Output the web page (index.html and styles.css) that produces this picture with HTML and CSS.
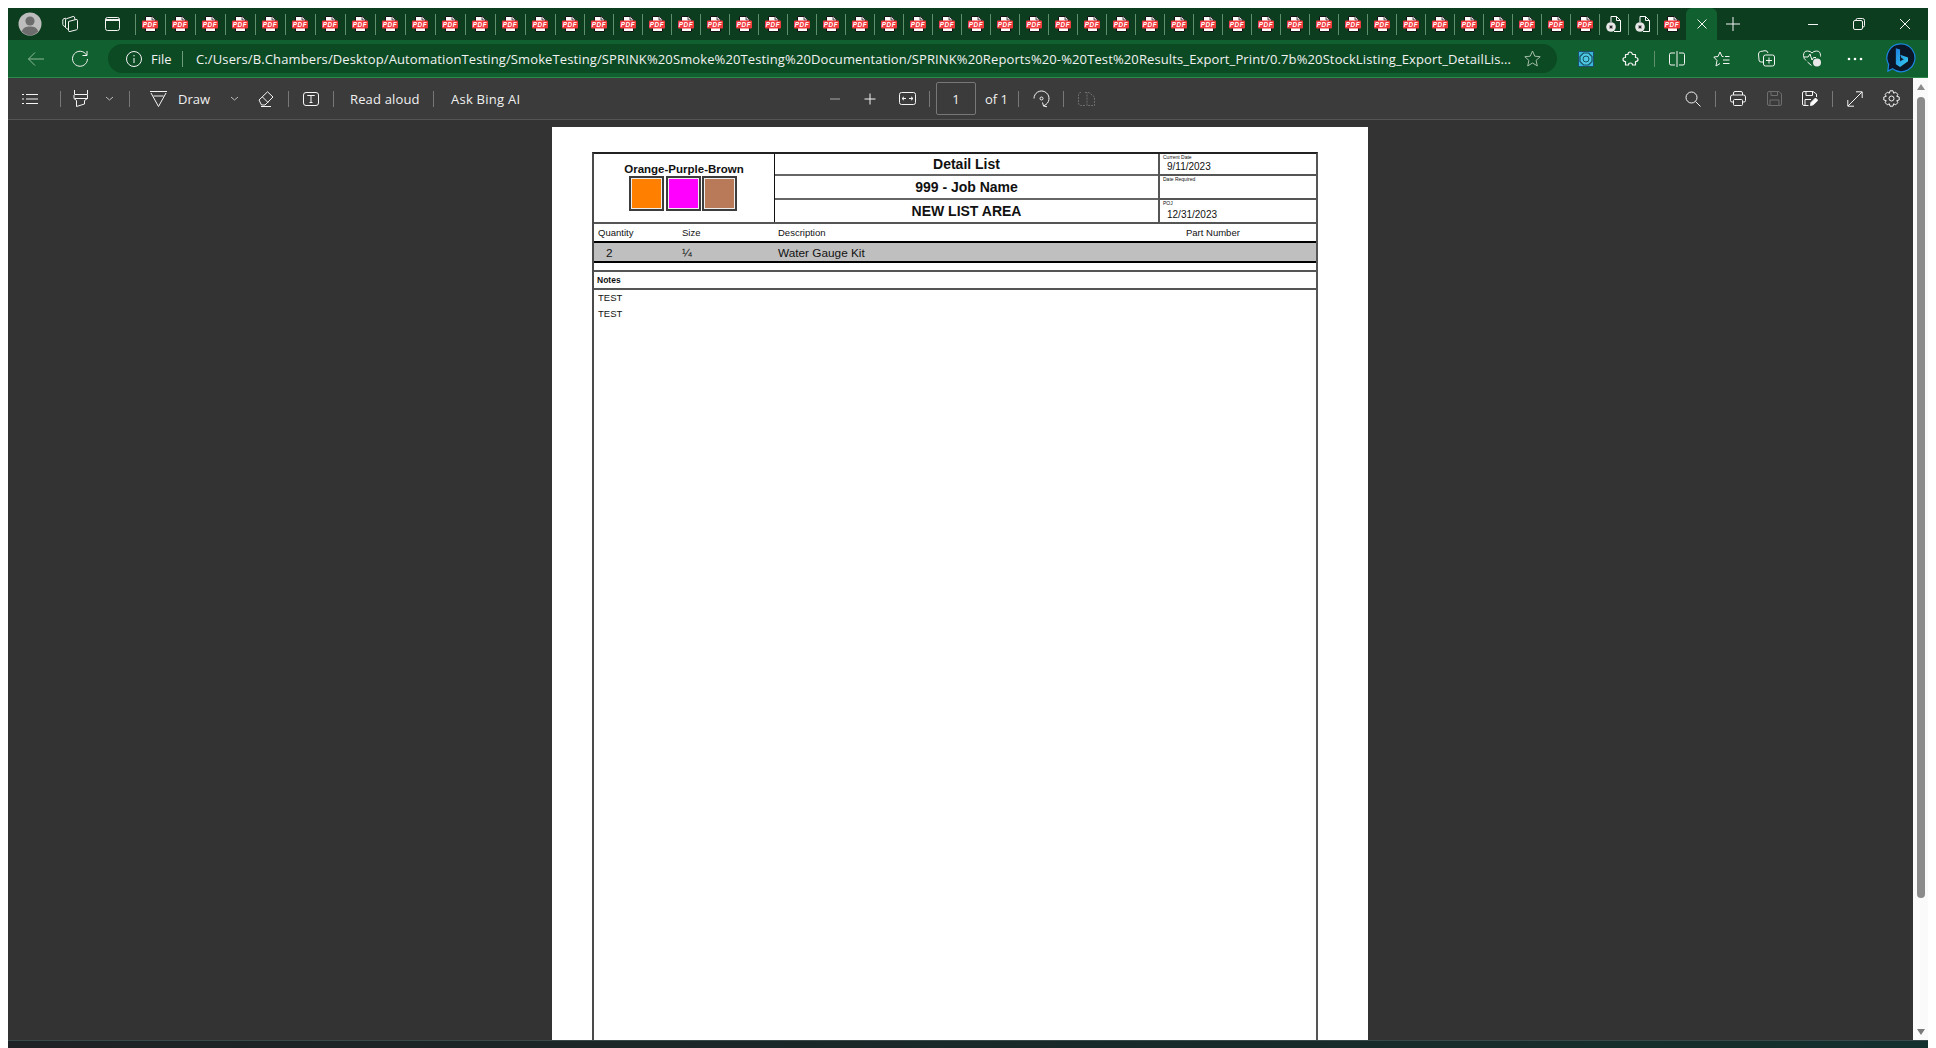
FILE: index.html
```html
<!DOCTYPE html>
<html>
<head>
<title>Detail List</title>
<link rel="stylesheet" href="styles.css">
</head>
<body>
<svg class="defs">
    <symbol id="pdf" viewBox="0 0 16 16">
        <path d="M3.5 .5H10.5L13.5 3.5V15.5H3.5Z" fill="#fff" stroke="#111"/>
        <path d="M10 .5V4H13.5" fill="#ddd" stroke="#111" stroke-width=".7"/>
        <rect x="0" y="4.5" width="16" height="8" rx="1" fill="#f03a3e"/>
        <text x="8" y="10.8" text-anchor="middle" font-family="Liberation Sans" font-weight="700" font-size="6.4" letter-spacing=".5" fill="#fff">PDF</text>
    </symbol>
    <symbol id="xdoc" viewBox="0 0 16 16">
        <path d="M5 6V.5H10.5L14.5 4.5V15.5H8M10.5 .5V4.5H14.5" fill="none" stroke="#fff"/>
        <circle cx="5" cy="11" r="4.8" fill="#e8e8e8"/>
        <path d="M3.6 9.6L6.4 12.4M6.4 9.6L3.6 12.4" stroke="#222" stroke-width="1.2"/>
    </symbol>
</svg>

<div class="window">
    <div class="tabstrip">
        <div class="avatar">
            <svg width="24" height="24" viewBox="0 0 24 24"><circle cx="12" cy="12" r="11.5" fill="#bdbdbd"/><circle cx="12" cy="9" r="4.6" fill="#6d6d6d"/><path d="M3.8 19.5C5 15.5 8 14.5 12 14.5S19 15.5 20.2 19.5A11 11 0 0 1 3.8 19.5Z" fill="#6d6d6d"/></svg>
        </div>
        <div class="strip-btn w36">
            <svg width="17" height="18" viewBox="0 0 17 18" class="line"><path d="M6.5 6.5L14 4.5Q15.5 4.2 15.5 5.5V13.5Q15.5 14.5 14.5 14.8L8 16.5Q6.5 16.8 6.5 15.5Z"/><path d="M6.5 14.5L4.5 13.5Q3.5 13 3.5 12V5Q3.5 4 4.5 3.7L11 1.5Q12 1.2 12.5 2L13 4.8"/><path d="M3.5 12L2 11Q.8 10.5 .8 9.5V5Q.8 4 2 3.7L4 3.2"/></svg>
        </div>
        <div class="strip-btn w40">
            <svg width="15" height="14" viewBox="0 0 15 14" class="line"><rect x=".5" y=".5" width="14" height="13" rx="2"/><path d="M.5 3.5H14.5M.5 2.5H14.5"/></svg>
        </div>
        <div class="tabs">
            <i class="tab"><svg><use href="#pdf"/></svg></i><i class="tab"><svg><use href="#pdf"/></svg></i><i class="tab"><svg><use href="#pdf"/></svg></i><i class="tab"><svg><use href="#pdf"/></svg></i>
            <i class="tab"><svg><use href="#pdf"/></svg></i><i class="tab"><svg><use href="#pdf"/></svg></i><i class="tab"><svg><use href="#pdf"/></svg></i><i class="tab"><svg><use href="#pdf"/></svg></i>
            <i class="tab"><svg><use href="#pdf"/></svg></i><i class="tab"><svg><use href="#pdf"/></svg></i><i class="tab"><svg><use href="#pdf"/></svg></i><i class="tab"><svg><use href="#pdf"/></svg></i>
            <i class="tab"><svg><use href="#pdf"/></svg></i><i class="tab"><svg><use href="#pdf"/></svg></i><i class="tab"><svg><use href="#pdf"/></svg></i><i class="tab"><svg><use href="#pdf"/></svg></i>
            <i class="tab"><svg><use href="#pdf"/></svg></i><i class="tab"><svg><use href="#pdf"/></svg></i><i class="tab"><svg><use href="#pdf"/></svg></i><i class="tab"><svg><use href="#pdf"/></svg></i>
            <i class="tab"><svg><use href="#pdf"/></svg></i><i class="tab"><svg><use href="#pdf"/></svg></i><i class="tab"><svg><use href="#pdf"/></svg></i><i class="tab"><svg><use href="#pdf"/></svg></i>
            <i class="tab"><svg><use href="#pdf"/></svg></i><i class="tab"><svg><use href="#pdf"/></svg></i><i class="tab"><svg><use href="#pdf"/></svg></i><i class="tab"><svg><use href="#pdf"/></svg></i>
            <i class="tab"><svg><use href="#pdf"/></svg></i><i class="tab"><svg><use href="#pdf"/></svg></i><i class="tab"><svg><use href="#pdf"/></svg></i><i class="tab"><svg><use href="#pdf"/></svg></i>
            <i class="tab"><svg><use href="#pdf"/></svg></i><i class="tab"><svg><use href="#pdf"/></svg></i><i class="tab"><svg><use href="#pdf"/></svg></i><i class="tab"><svg><use href="#pdf"/></svg></i>
            <i class="tab"><svg><use href="#pdf"/></svg></i><i class="tab"><svg><use href="#pdf"/></svg></i><i class="tab"><svg><use href="#pdf"/></svg></i><i class="tab"><svg><use href="#pdf"/></svg></i>
            <i class="tab"><svg><use href="#pdf"/></svg></i><i class="tab"><svg><use href="#pdf"/></svg></i><i class="tab"><svg><use href="#pdf"/></svg></i><i class="tab"><svg><use href="#pdf"/></svg></i>
            <i class="tab"><svg><use href="#pdf"/></svg></i><i class="tab"><svg><use href="#pdf"/></svg></i><i class="tab"><svg><use href="#pdf"/></svg></i><i class="tab"><svg><use href="#pdf"/></svg></i>
            <i class="tab"><svg><use href="#pdf"/></svg></i><i class="tab"><svg><use href="#pdf"/></svg></i><i class="tab"><svg><use href="#xdoc"/></svg></i><i class="tab"><svg><use href="#xdoc"/></svg></i><i class="tab"><svg><use href="#pdf"/></svg></i>
        </div>
        <div class="tab-active">
            <svg width="12" height="12" viewBox="0 0 12 12" class="line"><path d="M1.5 1.5L10.5 10.5M10.5 1.5L1.5 10.5"/></svg>
        </div>
        <div class="strip-btn w32">
            <svg width="16" height="16" viewBox="0 0 16 16" class="line"><path d="M8 1V15M1 8H15"/></svg>
        </div>
        <div class="win-controls">
            <div class="win-btn"><svg width="12" height="12" viewBox="0 0 12 12" class="line"><path d="M1 6.5H11"/></svg></div>
            <div class="win-btn"><svg width="12" height="12" viewBox="0 0 12 12" class="line"><rect x=".5" y="2.5" width="9" height="9" rx="1.5"/><path d="M3 2.5V2Q3 .5 4.5 .5H9.5Q11.5 .5 11.5 2.5V7.5Q11.5 9 10 9"/></svg></div>
            <div class="win-btn"><svg width="12" height="12" viewBox="0 0 12 12" class="line"><path d="M1 1L11 11M11 1L1 11"/></svg></div>
        </div>
    </div>

    <div class="addressbar">
        <div class="nav-btn back">
            <svg width="18" height="16" viewBox="0 0 18 16" fill="none" stroke="#8fb89b"><path d="M17 8H1.5M8 1.5L1.5 8L8 14.5"/></svg>
        </div>
        <div class="nav-btn">
            <svg width="18" height="18" viewBox="0 0 18 18" class="line"><path d="M15.5 5A7.5 7.5 0 1 0 16.5 9M16 1V5.5H11.5"/></svg>
        </div>
        <div class="pill">
            <svg width="16" height="16" viewBox="0 0 16 16" class="line"><circle cx="8" cy="8" r="7.5"/><path d="M8 7V12M8 4V5.4"/></svg>
            <span class="file">File</span>
            <span class="pill-sep"></span>
            <span class="url">C:/Users/B.Chambers/Desktop/AutomationTesting/SmokeTesting/SPRINK%20Smoke%20Testing%20Documentation/SPRINK%20Reports%20-%20Test%20Results_Export_Print/0.7b%20StockListing_Export_DetailLis...</span>
            <svg class="star" width="17" height="17" viewBox="0 0 17 17" fill="none" stroke="#a5bfa9"><path d="M8.5 1L10.8 6.2L16.2 6.7L12.1 10.4L13.3 15.9L8.5 13L3.7 15.9L4.9 10.4L.8 6.7L6.2 6.2Z"/></svg>
        </div>
        <div class="ext first">
            <svg width="16" height="16" viewBox="0 0 16 16"><rect x=".5" y=".5" width="15" height="15" fill="#37b6dc" stroke="#1d4f6b"/><path d="M5.5 2H10.5L14 5.5V10.500L10.500 14H5.500L2 10.500V5.500Z" fill="#4fc8e4" stroke="#17505f" stroke-width="1.200"/><circle cx="8" cy="8" r="3" fill="none" stroke="#17505f"/></svg>
        </div>
        <div class="ext">
            <svg width="17" height="16" viewBox="0 0 17 16" class="line puzzle"><path d="M4 3.5H6Q6 1 8 1T10.500 3.500H13.500V6.500Q16 6.500 16 8.500T13.500 10.500V14H10.500Q10.500 12 8.500 12T6.500 14H3.500V10.500Q1 10.500 1 8.500T3.500 6.500V3.500Z"/></svg>
        </div>
        <span class="addr-sep"></span>
        <div class="ext">
            <svg width="16" height="16" viewBox="0 0 16 16" class="line"><path d="M8 0V16M6 2H2Q.5 2 .5 3.5V12.5Q.5 14 2 14H6M10 2H14Q15.5 2 15.5 3.5V12.5Q15.5 14 14 14H10"/></svg>
        </div>
        <div class="ext">
            <svg width="17" height="16" viewBox="0 0 17 16" class="line"><path d="M10.5 5.5H9L7 1L5 5.5L.8 6L4 9.5L3 15L7 12.5"/><path d="M12 5.5H16.500M10 9H16.500M10 12.500H16.500"/></svg>
        </div>
        <div class="ext">
            <svg width="17" height="17" viewBox="0 0 17 17" class="line"><path d="M5 12H3Q1 12 1 10L.5 4Q.5 2 2.5 1.5L7 .7Q9.5 .5 10 3M7.5 5H14.5Q16.5 5 16.5 7V14Q16.5 16 14.5 16H7.5Q5.5 16 5.5 14V7Q5.5 5 7.5 5ZM11 7.5V13.5M8 10.5H14"/></svg>
        </div>
        <div class="ext">
            <svg width="18" height="17" viewBox="0 0 18 17" class="line"><path d="M3 10.5Q.5 8.5 .5 5.5Q.5 1 4.5 1Q7.5 1 9 3Q10.5 1 13.5 1Q17.5 1 17.5 5.5V6.5M1 7H5L7 4L9 10L10.5 7.5H13M4.5 12L8.5 15.5"/><circle cx="14" cy="12.5" r="4" fill="#e8e8e8" stroke="none"/></svg>
        </div>
        <div class="ext dots">
            <svg width="16" height="4" viewBox="0 0 16 4" fill="#fff"><circle cx="2" cy="2" r="1.3"/><circle cx="8" cy="2" r="1.3"/><circle cx="14" cy="2" r="1.3"/></svg>
        </div>
        <div class="bing">
            <svg width="30" height="31" viewBox="0 0 32 33">
                <defs><linearGradient id="bingfill" x1="0" y1="0" x2="1" y2="1"><stop offset="0" stop-color="#1d7fe0"/><stop offset="1" stop-color="#36d0f0"/></linearGradient></defs>
                <path d="M16 1A14.8 14.8 0 1 1 7 27.5L2 30L2.8 23A14.8 14.8 0 0 1 16 1Z" fill="#0b1626" stroke="#1a86e0" stroke-width="1.3"/>
                <path d="M10.500 5.500L15 7V19.500L19 17.200L16.500 16L15.200 12.500L23.500 15.500V19.500L15 25.500L10.500 22.500Z" fill="url(#bingfill)"/>
            </svg>
        </div>
    </div>

    <div class="viewer">
        <div class="viewer-main">
            <div class="pdf-toolbar">
                <div class="tool-group left">
                    <div class="tool w36"><svg width="16" height="12" viewBox="0 0 16 12" class="line"><path d="M4 1.5H16M4 6H16M4 10.5H16M0 1.5H2M0 6H2M0 10.5H2"/></svg></div>
                    <span class="sep s-list"></span>
                    <div class="tool w30"><svg width="16" height="17" viewBox="0 0 16 17" class="line"><path d="M1.5 0V4.5H14.5V0M1 5V8.5L3.5 10.5V16.5L11.5 14V10.5L14.5 8.5V5M1.5 8.5H14.5"/></svg></div>
                    <div class="tool w26"><svg class="chev" width="9" height="5" viewBox="0 0 9 5"><path d="M1 1L4.5 4L8 1"/></svg></div>
                    <span class="sep s-high"></span>
                    <div class="tool w36"><svg width="17" height="16" viewBox="0 0 17 16" class="line"><path d="M0 .5H17M1 2L8.5 15.5L16 2M3.5 5H13.5"/></svg></div>
                    <span class="label draw">Draw</span>
                    <div class="tool w24 after-draw"><svg class="chev" width="9" height="5" viewBox="0 0 9 5"><path d="M1 1L4.5 4L8 1"/></svg></div>
                    <div class="tool w32 eraser"><svg width="16" height="16" viewBox="0 0 16 16" class="line"><path d="M1 9L9.5 .8L15 6L7 14H3.5ZM4.5 6L10 11.5M3 15.5H13"/></svg></div>
                    <span class="sep s-eraser"></span>
                    <div class="tool w32"><svg width="16" height="14" viewBox="0 0 16 14" class="line"><rect x=".5" y=".5" width="15" height="13" rx="2.5"/><path d="M4.5 4V3.5H11.5V4M8 3.5V10.5M6.5 10.5H9.5"/></svg></div>
                    <span class="sep s-text"></span>
                    <span class="label read">Read aloud</span>
                    <span class="sep s-read"></span>
                    <span class="label ask">Ask Bing AI</span>
                </div>
                <div class="tool-group center">
                    <div class="tool w35"><svg width="12" height="12" viewBox="0 0 12 12" fill="none" stroke="#aaa"><path d="M1 6H11"/></svg></div>
                    <div class="tool w35"><svg width="12" height="12" viewBox="0 0 12 12" class="line"><path d="M6 .5V11.5M.5 6H11.5"/></svg></div>
                    <div class="tool w36 fit"><svg width="17" height="13" viewBox="0 0 17 13" class="line"><rect x=".5" y=".5" width="16" height="12" rx="2"/><path d="M3 6.5H7M5 4.8L3 6.5L5 8.2M14 6.5H10M12 4.8L14 6.5L12 8.2"/></svg></div>
                    <span class="sep s-fit"></span>
                    <div class="pagebox">1</div>
                    <span class="label of">of 1</span>
                    <span class="sep s-of"></span>
                    <div class="tool w36"><svg width="17" height="18" viewBox="0 0 17 18" class="line"><path d="M1 8.5A7.5 7.5 0 1 1 13 14.500L10.500 16M9.500 12.500L10.500 16L14 16.800"/><circle cx="8.500" cy="8.500" r="1.500"/></svg></div>
                    <span class="sep s-rot"></span>
                    <div class="tool w36"><svg width="17" height="14" viewBox="0 0 17 14" fill="none" stroke="#6e6e6e"><path d="M7 .5H11L16.5 5V13.5H9V.5M7 13.5H3Q.5 13.5 .5 11V3Q.5 .5 3 .5" stroke-dasharray="2 1"/></svg></div>
                </div>
                <div class="tool-group right">
                    <div class="tool w36"><svg width="16" height="16" viewBox="0 0 16 16" class="line"><circle cx="6.5" cy="6.5" r="5.5"/><path d="M10.5 10.5L15.5 15.5"/></svg></div>
                    <span class="sep s-search"></span>
                    <div class="tool w36"><svg width="16" height="15" viewBox="0 0 16 15" class="line"><path d="M3.5 4V2Q3.5 .5 5 .5H11Q12.5 .5 12.5 2V4M3.5 11H2Q.5 11 .5 9.5V6Q.5 4 2.5 4H13.5Q15.5 4 15.5 6V9.5Q15.5 11 14 11H12.5"/><rect x="3.5" y="8.5" width="9" height="6" rx="1"/></svg></div>
                    <div class="tool w36"><svg width="15" height="15" viewBox="0 0 15 15" fill="none" stroke="#6e6e6e"><path d="M2 .5H12L14.5 3V13Q14.5 14.5 13 14.5H2Q.5 14.5 .5 13V2Q.5 .5 2 .5ZM4 .5V4.5H10.5V.5M3 14.5V9H12V14.5"/></svg></div>
                    <div class="tool w36"><svg width="16" height="15" viewBox="0 0 16 15" class="line"><path d="M6.5 14.5H2Q.5 14.5 .5 13V2Q.5 .5 2 .5H11L14.5 3V6M4 .5V4.5H10.5V.5M3 14V8.5H9"/><path d="M8.5 14.5L9 11.5L13.5 7L15.8 9.3L11.3 13.8Z" fill="#fff"/></svg></div>
                    <span class="sep s-saveas"></span>
                    <div class="tool w36"><svg width="16" height="16" viewBox="0 0 16 16" class="line"><path d="M1 15L15 1M9 .8H15.2V7M.8 9V15.2H7"/></svg></div>
                    <div class="tool w36"><svg width="17" height="17" viewBox="0 0 17 17" class="line"><path d="M7 .8H10L10.6 3.2L12.7 2.2L14.8 4.3L13.8 6.4L16.2 7V10L13.8 10.6L14.8 12.7L12.7 14.8L10.6 13.8L10 16.2H7L6.4 13.8L4.3 14.8L2.2 12.7L3.2 10.6L.8 10V7L3.2 6.4L2.2 4.3L4.3 2.2L6.4 3.2Z"/><circle cx="8.5" cy="8.5" r="2.5"/></svg></div>
                </div>
            </div>

            <div class="canvas">
                <div class="page">
                    <div class="sheet">
                        <div class="head">
                            <div class="colors">
                                <div class="colors-name">Orange-Purple-Brown</div>
                                <div class="swatches">
                                    <span class="swatch orange"></span>
                                    <span class="swatch magenta"></span>
                                    <span class="swatch brown"></span>
                                </div>
                            </div>
                            <div class="titles">
                                <div class="title-row">Detail List</div>
                                <div class="title-row">999 - Job Name</div>
                                <div class="title-row">NEW LIST AREA</div>
                            </div>
                            <div class="dates">
                                <div class="date-row"><span class="date-label">Current Date</span><span class="date-value">9/11/2023</span></div>
                                <div class="date-row"><span class="date-label">Date Required</span></div>
                                <div class="date-row"><span class="date-label">POJ</span><span class="date-value">12/31/2023</span></div>
                            </div>
                        </div>
                        <div class="cols">
                            <span class="c-qty">Quantity</span>
                            <span class="c-size">Size</span>
                            <span class="c-desc">Description</span>
                            <span class="c-part">Part Number</span>
                        </div>
                        <div class="item">
                            <span class="c-qty i-qty">2</span>
                            <span class="c-size">¼</span>
                            <span class="c-desc">Water Gauge Kit</span>
                        </div>
                        <div class="spacer"></div>
                        <div class="notes-head">Notes</div>
                        <div class="notes">
                            <div>TEST</div>
                            <div>TEST</div>
                        </div>
                    </div>
                </div>
            </div>
        </div>
        <div class="scrollbar">
            <span class="arrow up"></span>
            <span class="thumb"></span>
            <span class="arrow down"></span>
        </div>
    </div>
    <div class="taskbar"></div>
</div>
</body>
</html>
```

FILE: styles.css
```css
*{
    margin: 0;
    padding: 0;
    box-sizing: border-box;
}
html, body{
    height: 100%;
    overflow: hidden;
    background: #fff;
}
.defs{
    display: none;
}
.window{
    margin: 8px 8px 0 8px;
    height: 1040px;
    display: flex;
    flex-direction: column;
    font-family: "Open Sans", sans-serif;
    color: #f2f2f2;
}
svg{
    display: block;
}
.line{
    fill: none;
    stroke: #f4f4f4;
    stroke-width: 1;
}
.puzzle{
    stroke-width: 1.2;
    stroke-linejoin: round;
}

/* tab strip */
.tabstrip{
    height: 32px;
    background: #0c3d1e;
    display: flex;
    align-items: stretch;
    flex-shrink: 0;
}
.avatar{
    width: 44px;
    display: flex;
    justify-content: center;
    align-items: center;
}
.strip-btn{
    display: flex;
    justify-content: center;
    align-items: center;
}
.strip-btn.w36{
    width: 36px;
}
.strip-btn.w40{
    width: 40px;
    margin-left: 4px;
    margin-right: 3px;
}
.strip-btn.w32{
    width: 32px;
}
.tabs{
    display: flex;
}
.tab{
    width: 29px;
    display: flex;
    justify-content: center;
    align-items: center;
    position: relative;
}
.tab:nth-child(-n+14){
    width: 30px;
}
.tab::before{
    content: "";
    position: absolute;
    left: 0;
    top: 6px;
    bottom: 5px;
    width: 1px;
    background: #5f8f6c;
}
.tab svg{
    width: 16px;
    height: 16px;
}
.tab-active{
    width: 31px;
    background: #11602f;
    border-radius: 6px 6px 0 0;
    display: flex;
    justify-content: center;
    align-items: center;
}
.win-controls{
    margin-left: auto;
    display: flex;
}
.win-btn{
    width: 46px;
    display: flex;
    justify-content: center;
    align-items: center;
}

/* address bar */
.addressbar{
    height: 38px;
    background: #11602f;
    border-bottom: 1px solid #2c8a4c;
    display: flex;
    align-items: center;
    padding-left: 10px;
    flex-shrink: 0;
}
.nav-btn{
    width: 36px;
    height: 30px;
    display: flex;
    justify-content: center;
    align-items: center;
}
.nav-btn.back{
    margin-right: 8px;
}
.pill{
    margin-left: 10px;
    width: 1449px;
    height: 29px;
    border-radius: 15px;
    background: #0c4a24;
    display: flex;
    align-items: center;
    padding-left: 18px;
}
.file{
    margin-left: 9px;
    width: 22px;
    font-size: 13px;
}
.pill-sep{
    width: 1px;
    height: 16px;
    background: #6f9c7c;
    margin-left: 9px;
}
.url{
    margin-left: 13px;
    width: 1315px;
    font-size: 13px;
    letter-spacing: .12px;
    white-space: nowrap;
    overflow: hidden;
    flex-shrink: 0;
}
.star{
    margin-left: 13px;
}
.ext{
    width: 45px;
    height: 30px;
    display: flex;
    justify-content: center;
    align-items: center;
    flex-shrink: 0;
}
.ext.first{
    margin-left: 6px;
}
.addr-sep{
    width: 1px;
    height: 16px;
    background: #5f8f6c;
    margin-left: 1px;
    margin-right: -1px;
}
.ext.dots{
    margin-left: -2px;
}
.bing{
    margin-left: 9px;
}

/* viewer */
.viewer{
    flex: 1;
    min-height: 0;
    display: flex;
}
.viewer-main{
    flex: 1;
    min-width: 0;
    display: flex;
    flex-direction: column;
    background: #333;
}
.pdf-toolbar{
    height: 42px;
    background: #3b3b3b;
    border-bottom: 1px solid #555;
    display: flex;
    align-items: center;
    flex-shrink: 0;
}
.tool-group{
    display: flex;
    align-items: center;
}
.tool-group.left{
    padding-left: 4px;
    width: 809px;
}
.tool-group.right{
    margin-left: auto;
    padding-right: 4px;
}
.tool{
    height: 32px;
    display: flex;
    justify-content: center;
    align-items: center;
    flex-shrink: 0;
}
.w24{ width: 24px; }
.w26{ width: 26px; }
.w30{ width: 30px; }
.w32{ width: 32px; }
.w35{ width: 35px; }
.w36{ width: 36px; }
.chev{
    fill: none;
    stroke: #bbb;
}
.sep{
    width: 1px;
    height: 16px;
    background: #777;
    flex-shrink: 0;
}
.s-list{ margin: 0 5px 0 12px; }
.s-high{ margin: 0 10px 0 7px; }
.label{
    font-size: 13px;
    color: #f0f0f0;
    white-space: nowrap;
}
.draw{
    margin-left: 2px;
    width: 32px;
}
.after-draw{
    margin-left: 12px;
}
.eraser{
    margin-left: 4px;
}
.s-eraser{ margin: 0 6px; }
.s-text{ margin-left: 6px; }
.read{
    margin-left: 16px;
    width: 69px;
    letter-spacing: .15px;
}
.s-read{ margin: 0 17px 0 14px; }
.ask{
    letter-spacing: .25px;
}
.fit{
    margin-left: 2px;
}
.s-fit{ margin: 0 6px 0 4px; }
.pagebox{
    width: 40px;
    height: 33px;
    border: 1px solid #777;
    border-radius: 2px;
    font-size: 13px;
    display: flex;
    justify-content: center;
    align-items: center;
}
.of{
    margin-left: 9px;
    width: 25px;
}
.s-of{ margin: 0 4px 0 8px; }
.s-rot{ margin: 0 4px; }
.s-search{ margin: 0 4px; }
.s-saveas{ margin: 0 4px; }

/* pdf page */
.canvas{
    flex: 1;
    min-height: 0;
    overflow: hidden;
}
.page{
    width: 816px;
    height: 1056px;
    margin: 7px 0 0 544px;
    background: #fff;
    padding: 25px 0 0 40px;
    font-family: "Liberation Sans", sans-serif;
    color: #111;
}
.sheet{
    width: 726px;
    height: 1000px;
    border-left: 2px solid #4a4a4a;
    border-right: 2px solid #555;
    border-top: 2px solid #222;
}
.head{
    display: flex;
    height: 70px;
    border-bottom: 2px solid #555;
}
.colors{
    width: 181px;
    border-right: 1px solid #111;
    display: flex;
    flex-direction: column;
    align-items: center;
}
.colors-name{
    font-size: 11.5px;
    font-weight: 700;
    margin-top: 8px;
    line-height: 14px;
}
.swatches{
    display: flex;
    gap: 1.5px;
    margin-right: 2px;
}
.swatch{
    width: 35px;
    height: 35px;
    border: 2px solid #3c3c3c;
    box-shadow: inset 0 0 0 1px #eee;
}
.orange{ background: #ff8000; }
.magenta{ background: #ff00ff; }
.brown{ background: #b87a58; }
.titles{
    width: 385px;
    display: flex;
    flex-direction: column;
    border-right: 2px solid #555;
}
.title-row{
    height: 24px;
    display: flex;
    justify-content: center;
    align-items: center;
    font-size: 14px;
    font-weight: 700;
    border-top: 2px solid #666;
}
.title-row:first-child{
    height: 20px;
    border-top: none;
}
.title-row:last-child{
    padding-bottom: 1px;
}
.dates{
    flex: 1;
    display: flex;
    flex-direction: column;
}
.date-row{
    height: 24px;
    border-top: 2px solid #555;
    display: flex;
    flex-direction: column;
}
.date-row:first-child{
    height: 20px;
    border-top: none;
}
.date-label{
    font-size: 5px;
    line-height: 6px;
    padding-left: 3px;
}
.date-value{
    font-size: 10px;
    line-height: 12px;
    padding-left: 7px;
    margin-top: 3px;
}
.date-row:first-child .date-value{
    margin-top: 1px;
}
.cols{
    height: 19px;
    display: flex;
    align-items: center;
    font-size: 9.5px;
    border-bottom: 2px solid #000;
}
.c-qty{
    width: 88px;
    padding-left: 4px;
    flex-shrink: 0;
}
.c-size{
    width: 96px;
    flex-shrink: 0;
}
.c-desc{
    width: 408px;
    flex-shrink: 0;
}
.item{
    height: 20px;
    display: flex;
    align-items: center;
    background: #bfbfbf;
    border-bottom: 2px solid #000;
    font-size: 11.8px;
    padding-top: 2px;
}
.i-qty{
    padding-left: 12px;
}
.spacer{
    height: 9px;
    border-bottom: 2px solid #555;
}
.notes-head{
    height: 18px;
    border-bottom: 2px solid #555;
    font-size: 8.5px;
    font-weight: 700;
    padding-left: 3px;
    line-height: 16px;
}
.notes{
    padding: 0 0 0 4px;
    font-size: 9.5px;
    line-height: 16px;
}

/* scrollbar */
.scrollbar{
    width: 15px;
    background: #fafafa;
    display: flex;
    flex-direction: column;
    align-items: center;
    padding-top: 6px;
}
.arrow{
    width: 0;
    height: 0;
    border-left: 4px solid transparent;
    border-right: 4px solid transparent;
}
.arrow.up{
    border-bottom: 6px solid #8b8b8b;
}
.arrow.down{
    border-top: 6px solid #7a7a7a;
    margin-bottom: 5px;
}
.thumb{
    width: 8px;
    height: 801px;
    background: #8b8b8b;
    border-radius: 4px;
    margin-top: 7px;
    margin-bottom: auto;
}
.taskbar{
    height: 8px;
    flex-shrink: 0;
    background: linear-gradient(90deg, #1f2224, #14302e);
    border-top: 1px solid #3a4a4a;
}
```
